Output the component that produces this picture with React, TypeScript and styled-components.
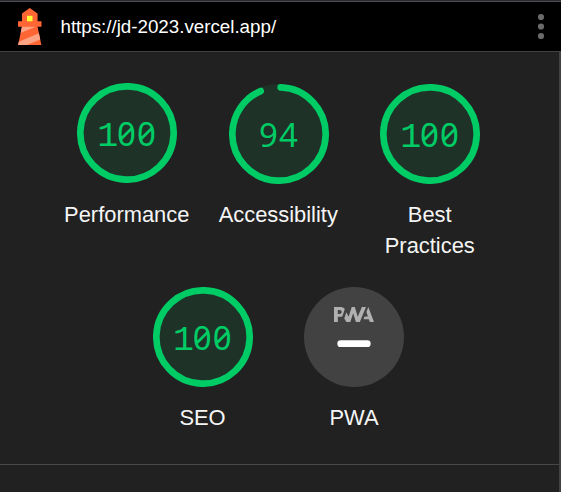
import React from "react";
import styled, { createGlobalStyle } from "styled-components";

const Global = createGlobalStyle`
  * { box-sizing: border-box; }
  body {
    margin: 0;
    background: #212121;
    color: #f5f5f5;
    font-family: "Liberation Sans", Arial, sans-serif;
    overflow: hidden;
  }
`;

const Page = styled.div`
  height: 492px;
  display: flex;
  flex-direction: column;
`;

const Topbar = styled.header`
  height: 52px;
  flex: none;
  display: flex;
  align-items: center;
  padding: 0 13px 0 11px;
  background: #000;
  border-top: 1px solid #292a2d;
  border-bottom: 1px solid #424242;
  box-shadow: inset 0 1px 0 #4a4c50;
`;

const Logo = styled.svg`
  width: 37.5px;
  height: 37.5px;
  margin-top: 1px;
`;

const Url = styled.span`
  margin-left: 12px;
  margin-top: 2px;
  flex: 1;
  color: #fff;
  font-size: 18.8px;
  letter-spacing: -0.02px;
  line-height: 24px;
`;

const Menu = styled.svg`
  width: 14px;
  height: 28px;
  margin-top: 2px;
  fill: #6a6a6a;
`;

const Report = styled.main`
  flex: 1;
  border-right: 2px solid #424242;
`;

const Scores = styled.section`
  height: 413px;
  padding: 19px 26px 0 24px;
  display: flex;
  flex-wrap: wrap;
  justify-content: center;
  align-content: flex-start;
  border-bottom: 1px solid #484848;
`;

const Gauge = styled.div<{ $lift?: boolean; $lower?: boolean }>`
  width: 151.5px;
  padding: ${(p) => (p.$lift ? "12px" : "13px")} 12px 0;
  height: ${(p) => (p.$lower ? "190px" : "203px")};
  display: flex;
  flex-direction: column;
  align-items: center;
`;

const Dial = styled.div`
  width: 100px;
  height: 100px;
  display: grid;
  place-items: center;
  > * { grid-area: 1 / 1; }
`;

const Ring = styled.svg`
  width: 100px;
  height: 100px;
  display: block;
`;

const Score = styled.div`
  color: #00cc66;
  font-family: "Noto Sans", sans-serif;
  font-size: 33px;
  line-height: 40px;
  letter-spacing: 1px;
  font-feature-settings: "zero" 1;
  margin-top: 2px;
  padding-left: 1px;
`;

const One = styled.span`
  font-family: "Liberation Mono", monospace;
  font-size: 35px;
  line-height: 1;
  letter-spacing: -1.2px;
  margin-left: -1px;
`;

const Label = styled.div<{ $lift?: boolean }>`
  margin-top: ${(p) => (p.$lift ? "16px" : "15px")};
  margin-right: 0.5px;
  font-size: 21.9px;
  line-height: 31px;
  text-align: center;
`;

const CIRC = 2 * Math.PI * 56;

type ScoreGaugeProps = { score: number; label: string; lift?: boolean; lower?: boolean };

function ScoreGauge({ score, label, lift, lower }: ScoreGaugeProps) {
  const arc = score === 100 ? CIRC : (score / 100) * CIRC - 4;
  const text = String(score);
  return (
    <Gauge $lift={lift} $lower={lower}>
      <Dial>
        <Ring viewBox="0 0 120 120">
          <circle cx="60" cy="60" r="60" fill="#1e3228" />
          <circle
            cx="60" cy="60" r="56" fill="none" stroke="#00cc66" strokeWidth="8"
            strokeLinecap="round" strokeDasharray={`${arc} ${CIRC}`}
            transform="rotate(-87.9537 60 60)"
          />
        </Ring>
        <Score>{text[0] === "1" ? <><One>1</One>{text.slice(1)}</> : text}</Score>
      </Dial>
      <Label $lift={lift}>{label}</Label>
    </Gauge>
  );
}

function PwaGauge() {
  return (
    <Gauge $lower>
      <Dial>
        <Ring viewBox="0 0 60 60">
          <circle cx="30" cy="30" r="30" fill="#424242" />
          <g fill="#b0b0b0">
            <path d="M35.66 19.39l.7-1.75h2L37.4 15 38.6 12l3.4 9h-2.51l-.58-1.61z" />
            <path d="M33.52 21l3.65-9h-2.42l-2.5 5.82L30.5 12h-1.86l-1.9 5.82-1.35-2.65-1.21 3.72L25.4 21h2.38l1.72-5.2 1.64 5.2z" />
            <path fillRule="nonzero" d="M20.3 17.91h1.48c.45 0 .85-.05 1.2-.15l.39-1.18 1.07-3.3a2.64 2.64 0 0 0-.28-.37c-.55-.6-1.36-.91-2.42-.91H18v9h2.3V17.9zm1.96-3.84c.22.22.33.5.33.87 0 .36-.1.65-.29.87-.2.23-.59.35-1.15.35h-.86v-2.41h.87c.52 0 .89.1 1.1.32z" />
          </g>
          <rect x="20" y="32" width="20" height="4" rx="2" fill="#fff" />
        </Ring>
      </Dial>
      <Label>PWA</Label>
    </Gauge>
  );
}

export default function App() {
  return (
    <Page>
      <Global />
      <Topbar>
        <Logo viewBox="0 0 48 48">
          <path d="m14 7 10-7 10 7v10h5v7h-5l5 24H9l5-24H9v-7h5V7Z" fill="#F63" />
          <path d="M31.561 24H14l-1.689 8.105L31.561 24ZM18.983 48H9l1.022-4.907L35.723 32.27l1.663 7.98L18.983 48Z" fill="#FFA385" />
          <path fill="#FF3" d="M20.5 10h7v7h-7z" />
        </Logo>
        <Url>https://jd-2023.vercel.app/</Url>
        <Menu viewBox="0 0 14 28">
          <circle cx="7" cy="4" r="3.1" />
          <circle cx="7" cy="13.5" r="3.1" />
          <circle cx="7" cy="23" r="3.1" />
        </Menu>
      </Topbar>
      <Report>
        <Scores>
          <ScoreGauge score={100} label="Performance" lift />
          <ScoreGauge score={94} label="Accessibility" />
          <ScoreGauge score={100} label="Best Practices" />
          <ScoreGauge score={100} label="SEO" lower />
          <PwaGauge />
        </Scores>
      </Report>
    </Page>
  );
}
